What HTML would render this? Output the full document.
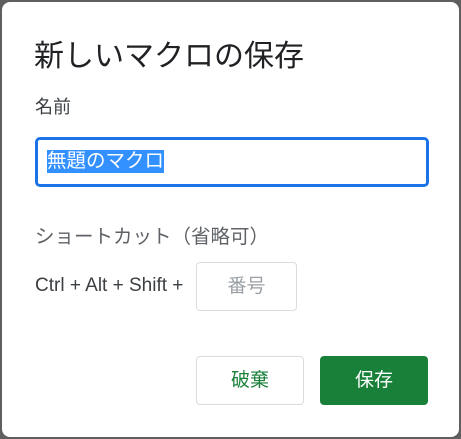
<!DOCTYPE html><html><head><meta charset="utf-8"><style>
body{margin:0;width:461px;height:439px;background:#5f5f5f;font-family:"Liberation Sans","Noto Sans CJK JP",sans-serif;overflow:hidden}
.d{position:absolute;left:2px;top:2px;width:457px;height:435px;background:#fff;border-radius:8px}
.a{position:absolute;white-space:nowrap}
</style></head><body><div class="d"></div>
<div class="a" style="left:34px;top:31px;font-size:30px;color:#202124">新しいマクロの保存</div>
<div class="a" style="left:35px;top:93px;font-size:18px;color:#3c4043">名前</div>
<div class="a" style="left:35px;top:137px;width:388px;height:44px;border:3px solid #1a73e8;border-radius:5px"></div>
<div class="a" style="left:47px;top:150px;height:23px;line-height:23px;font-size:19.5px;background:#3390ff;color:#fff">無題のマクロ</div>
<div class="a" style="left:35px;top:220px;font-size:19.5px;color:#5f6368">ショートカット（省略可）</div>
<div class="a" style="left:35px;top:275px;font-size:19px;color:#3c4043">Ctrl + Alt + Shift +</div>
<div class="a" style="left:196px;top:262px;width:99px;height:47px;border:1px solid #dadce0;border-radius:4px;text-align:center;line-height:47px;font-size:19px;color:#9aa0a6">番号</div>
<div class="a" style="left:196px;top:356px;width:106px;height:47px;border:1px solid #dadce0;border-radius:4px;text-align:center;line-height:47px;font-size:19px;color:#188038">破棄</div>
<div class="a" style="left:320px;top:356px;width:108px;height:49px;background:#188038;border-radius:4px;text-align:center;line-height:49px;font-size:19px;color:#fff">保存</div>
</body></html>
